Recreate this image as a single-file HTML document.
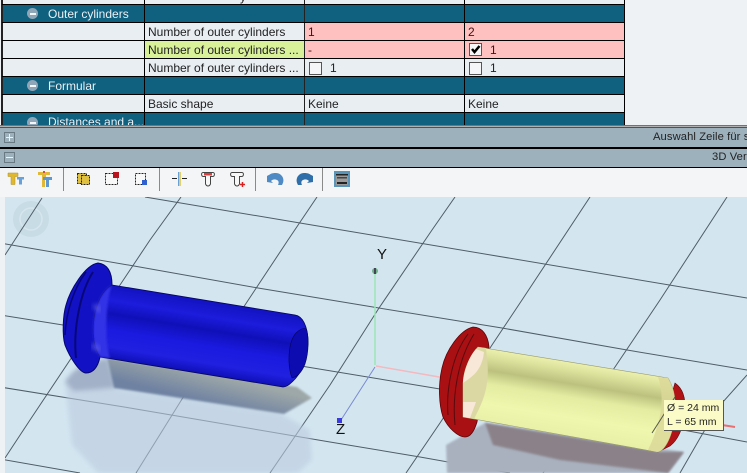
<!DOCTYPE html>
<html><head><meta charset="utf-8"><style>
html,body{margin:0;padding:0;background:#eef2f5}
#p{position:relative;width:747px;height:473px;overflow:hidden;background:#eef2f5;font-family:"Liberation Sans",sans-serif;font-size:12px;color:#222}
.a{position:absolute}
.t{position:absolute;white-space:nowrap;line-height:14px}
.w{color:#eaf0f4}
.cb{position:absolute;width:11px;height:11px;border:1px solid #555;background:#f4f6f7}
.min{position:absolute;width:11px;height:11px;border-radius:50%;background:#8fa6b8}
.min:after{content:"";position:absolute;left:3px;top:5px;width:6px;height:2px;background:#f4f6f8}
svg{position:absolute;left:0;top:0}
</style></head><body><div id="p">
<!-- table backgrounds -->
<div class="a" style="left:2px;top:0;width:622px;height:125px;background:#e8eef2"></div>
<div class="a" style="left:2px;top:4px;width:622px;height:18px;background:#10607f"></div>
<div class="a" style="left:2px;top:76px;width:622px;height:18px;background:#10607f"></div>
<div class="a" style="left:2px;top:112px;width:622px;height:13px;background:#10607f"></div>
<div class="a" style="left:304px;top:22px;width:320px;height:18px;background:#ffc0c0"></div>
<div class="a" style="left:304px;top:40px;width:320px;height:18px;background:#ffc0c0"></div>
<div class="a" style="left:145px;top:40px;width:159px;height:18px;background:#d9f29a"></div>
<!-- grid lines -->
<div class="a" style="left:1px;top:0;width:2px;height:127px;background:#222"></div>
<div class="a" style="left:144px;top:0;width:1px;height:126px;background:#000"></div>
<div class="a" style="left:304px;top:0;width:1px;height:126px;background:#222"></div>
<div class="a" style="left:464px;top:0;width:1px;height:125px;background:#000"></div>
<div class="a" style="left:624px;top:0;width:1px;height:125px;background:#000"></div>
<div class="a" style="left:2px;top:4px;width:623px;height:1px;background:#000"></div>
<div class="a" style="left:2px;top:22px;width:623px;height:1px;background:#000"></div>
<div class="a" style="left:2px;top:40px;width:623px;height:1px;background:#000"></div>
<div class="a" style="left:2px;top:58px;width:623px;height:1px;background:#000"></div>
<div class="a" style="left:2px;top:76px;width:623px;height:1px;background:#000"></div>
<div class="a" style="left:2px;top:94px;width:623px;height:1px;background:#000"></div>
<div class="a" style="left:2px;top:112px;width:623px;height:1px;background:#000"></div>
<!-- text -->
<div class="t" style="left:240px;top:-10px">y</div>
<div class="min" style="left:27px;top:8px"></div>
<div class="t w" style="left:48px;top:7px">Outer cylinders</div>
<div class="t" style="left:148px;top:25px">Number of outer cylinders</div>
<div class="t" style="left:148px;top:43px">Number of outer cylinders ...</div>
<div class="t" style="left:148px;top:61px">Number of outer cylinders ...</div>
<div class="t" style="left:308px;top:25px;color:#411">1</div>
<div class="t" style="left:468px;top:25px;color:#411">2</div>
<div class="t" style="left:308px;top:43px;color:#411">-</div>
<div class="cb" style="left:469px;top:43px"></div>
<svg width="747" height="473" style="z-index:2"><path d="M472 49l2.500 3 5-6" fill="none" stroke="#000" stroke-width="2.500"/></svg>
<div class="t" style="left:490px;top:43px;color:#411">1</div>
<div class="cb" style="left:309px;top:62px"></div>
<div class="t" style="left:330px;top:61px">1</div>
<div class="cb" style="left:469px;top:62px"></div>
<div class="t" style="left:490px;top:61px">1</div>
<div class="min" style="left:27px;top:80px"></div>
<div class="t w" style="left:48px;top:79px">Formular</div>
<div class="t" style="left:148px;top:97px">Basic shape</div>
<div class="t" style="left:308px;top:97px">Keine</div>
<div class="t" style="left:468px;top:97px">Keine</div>
<div class="a" style="left:2px;top:112px;width:622px;height:13px;overflow:hidden"><div class="min" style="left:25px;top:5px"></div><div class="t w" style="left:46px;top:3px">Distances and a...</div></div>
<!-- panel bars -->
<div class="a" style="left:0;top:125px;width:747px;height:3px;background:linear-gradient(#333,#ccc 40%,#222)"></div>
<div class="a" style="left:0;top:128px;width:747px;height:19px;background:#9db1bd"></div>
<div class="a" style="left:0;top:147px;width:747px;height:2px;background:#000"></div>
<div class="a" style="left:0;top:149px;width:747px;height:18px;background:#9db1bd"></div>
<div class="a" style="left:0;top:167px;width:747px;height:1px;background:#000"></div>
<div class="a" style="left:4px;top:132px;width:9px;height:9px;border:1px solid #6a7a84;background:linear-gradient(#eef2f4,#eef2f4) center/7px 1px no-repeat,linear-gradient(#eef2f4,#eef2f4) center/1px 7px no-repeat"></div>
<div class="a" style="left:4px;top:152px;width:9px;height:9px;border:1px solid #6a7a84;background:linear-gradient(#eef2f4,#eef2f4) center/7px 1px no-repeat"></div>
<div class="t" style="left:653px;top:130px;font-size:11.200px;letter-spacing:.1px;color:#222">Auswahl Zeile für s</div>
<div class="t" style="left:712px;top:150px;font-size:11.200px;letter-spacing:.1px;color:#222">3D Ver</div>
<!-- toolbar -->
<div class="a" style="left:0;top:168px;width:747px;height:29px;background:#f3f5f7"></div>
<div class="a" style="left:63px;top:168px;width:1px;height:23px;background:#8a8a8a"></div>
<div class="a" style="left:159px;top:168px;width:1px;height:23px;background:#8a8a8a"></div>
<div class="a" style="left:255px;top:168px;width:1px;height:23px;background:#8a8a8a"></div>
<div class="a" style="left:322px;top:168px;width:1px;height:23px;background:#8a8a8a"></div>
<!-- viewport -->
<div class="a" style="left:5px;top:197px;width:742px;height:276px;background:#d3e6f0;overflow:hidden"></div>
<svg width="747" height="473">
<defs>
<clipPath id="vp"><rect x="5" y="197" width="742" height="276"/></clipPath>
<linearGradient id="bl" gradientUnits="userSpaceOnUse" x1="206" y1="300" x2="194" y2="372">
<stop offset="0" stop-color="#1212c0"/><stop offset=".22" stop-color="#1c1cdc"/><stop offset=".4" stop-color="#1010b8"/><stop offset=".62" stop-color="#1a1ae0"/><stop offset=".85" stop-color="#2020e0"/><stop offset="1" stop-color="#1010b8"/></linearGradient>
<linearGradient id="yl" gradientUnits="userSpaceOnUse" x1="577" y1="362" x2="565" y2="436">
<stop offset="0" stop-color="#eef2b0"/><stop offset=".12" stop-color="#dce29c"/><stop offset=".3" stop-color="#bcc27e"/><stop offset=".48" stop-color="#e4eca2"/><stop offset=".75" stop-color="#eff7ae"/><stop offset="1" stop-color="#e8f0a8"/></linearGradient>
<linearGradient id="sh" gradientUnits="userSpaceOnUse" x1="205" y1="372" x2="198" y2="400"><stop offset="0" stop-color="#9ea8a8"/><stop offset="1" stop-color="#6f82a2"/></linearGradient>
<filter id="b2"><feGaussianBlur stdDeviation="1"/></filter>
<filter id="b4"><feGaussianBlur stdDeviation="2.500"/></filter>
</defs>
<g clip-path="url(#vp)">
<circle cx="31" cy="219" r="18" fill="#c8dce6"/><circle cx="31" cy="219" r="11" fill="none" stroke="#d6e6ee" stroke-width="1.500"/>
<g fill="none" stroke="#4f5d68" stroke-width="1">
<path d="M145 197L300 223 747 298"/>
<path d="M0 243L134 266 258 288 379 308 502 328 627 350 747 370"/>
<path d="M0 315L63 325 307 367 440 389 683 430 747 442"/>
<path d="M0 387L130 408 230 425 330 442 420 457 510 473"/>
<path d="M0 459L80 473"/>
<path d="M42 198L18 235 5 255"/>
<path d="M181 197L150 240 68 363 30 420 5 458"/>
<path d="M317 197L288 240 245 305 197 375 136 473"/>
<path d="M455 197L432 230 379 308 330 385 270 473"/>
<path d="M590 197L522 300 492 345 440 423 406 473"/>
<path d="M727 197L660 300 615 367 567 438 543 473"/>
<path d="M747 375L722 403 703 433 680 473"/>
</g>
<!-- blue shadow/reflection -->
<path d="M65 382L115 388 280 413 310 430 312 460 298 473 98 473 72 445Z" fill="#bccbdf" opacity=".6" filter="url(#b4)"/>
<path d="M65 382C75 365 90 362 108 358L116 388 74 391Z" fill="#a3b1c8" filter="url(#b4)"/>
<path d="M107 358L297 387 312 398 284 414 114 388Z" fill="url(#sh)" filter="url(#b2)"/>
<!-- red shadow/reflection -->
<path d="M446 445L485 423 684 452 668 473 447 473Z" fill="#a9b1bf" filter="url(#b2)"/>
<path d="M485 423L660 452 684 452 668 473 560 460 493 445Z" fill="#8b8289" filter="url(#b2)"/>
<!-- axes -->
<path d="M375 268V365" stroke="#9be6b4" stroke-width="1.500"/>
<circle cx="375" cy="271" r="3" fill="#6fb08a"/><rect x="374" y="268" width="2" height="6" fill="#445"/>
<path d="M376 366L445 378" stroke="#f4b8bf" stroke-width="1.500"/>
<path d="M375 367L341 420" stroke="#7a8ad0" stroke-width="1"/>
<rect x="337" y="418" width="5" height="5" fill="#3a3ae0"/>
<path d="M722 425L735 427" stroke="#e87070" stroke-width="2"/>
<!-- blue part -->
<path d="M98 263C106 264 112 270 112 285L100 357C98 366 94 373 86 373 80 373 70 358 65 345 62 335 63 315 66 305 70 290 85 265 98 263Z" fill="#1212c4" stroke="#05056a" stroke-width="1"/>
<path d="M65 335C66 312 74 288 86 272" fill="none" stroke="#06067a" stroke-width="1.500"/>
<path d="M76 358C73 330 80 292 93 272" fill="none" stroke="#07077a" stroke-width="2"/>
<path d="M112 285L295 315C302 316 308 325 308 343 307 360 302 373 292 382 289 385 286 387 283 387L100 357C88 340 92 296 112 285Z" fill="url(#bl)" stroke="#05055a" stroke-width=".8"/>
<path d="M100 357C88 340 92 296 112 285 106 300 104 340 110 358Z" fill="#3232e6" filter="url(#b2)"/>
<path d="M92 345l8 5M94 305l6 6" stroke="#6a6ae8" stroke-width="5" opacity=".6" filter="url(#b4)"/>
<path d="M306 328C309 335 309 352 305 364 302 372 297 377 292 378 287 365 288 342 296 333 299 330 303 328 306 328Z" fill="#0c0cb0" stroke="#05055a" stroke-width=".6"/>
<!-- red part -->
<path d="M473 327C482 327 488 335 489 347L477 422C474 432 470 437 465 437 458 437 448 428 443 417 439 405 438 385 442 368 446 350 460 330 473 327Z" fill="#a81014" stroke="#5a0508" stroke-width=".8"/>
<path d="M448 415C446 390 452 355 468 334M455 425C452 395 458 360 474 334" fill="none" stroke="#5a0a0c" stroke-width="1"/>
<path d="M675 383C682 388 686 396 685 413 683 428 678 440 670 446L658 452 670 400Z" fill="#b01216" stroke="#600608" stroke-width=".6"/>
<path d="M478 347L668 378C674 388 677 400 674 420 672 438 664 452 657 452L463 417 463 383C465 368 470 355 478 347Z" fill="url(#yl)" stroke="#9a9a68" stroke-width=".6"/>
<path d="M478 347C470 355 463 370 463 383L463 417 474 419C484 400 490 385 487 358L486 348Z" fill="#dcd8a4"/>
<path d="M476 349C468 358 464 372 463 383C470 378 482 372 484 352ZM463 402L463 417 470 418 476 402Z" fill="#f8e8d8"/>
<path d="M658 377L668 378C674 388 677 400 674 420 672 438 664 452 657 452L648 450C660 425 666 400 658 377Z" fill="#dcd898" opacity=".85"/>
<path d="M675 397L652 433" stroke="#55584a" stroke-width="1"/>
</g>
<!-- toolbar icons -->
<g>
<path d="M8 173h10v3.500h-3v8h-4v-8h-3z" fill="#e0b830" stroke="#b09020" stroke-width=".5"/>
<path d="M17 177h7v2.500h-2v5h-3v-5h-2z" fill="#6aa0d8"/>
<path d="M38 172h12v3h-4v2h-1v10h-3v-12h-4z" fill="#e2b838"/>
<path d="M43 177h9v3h-3v7h-3v-7h-3z" fill="#5f97d0"/>
<rect x="43" y="171" width="2" height="2" fill="#d05050"/>
<rect x="77.500" y="173.500" width="9" height="10" fill="#e0c040" stroke="#222" stroke-dasharray="2 1"/>
<rect x="81.500" y="175.500" width="8" height="9" fill="#e0c040" stroke="#222" stroke-dasharray="2 1"/>
<rect x="105.500" y="173.500" width="12" height="11" fill="#f8f8f8" stroke="#222" stroke-dasharray="2 1"/>
<rect x="113" y="172" width="6" height="6" fill="#b81420"/>
<rect x="135.500" y="173.500" width="10" height="11" fill="#f8f8f8" stroke="#222" stroke-dasharray="2 1"/>
<rect x="142" y="180" width="5" height="5" fill="#3060d0"/>
<path d="M172 178.500h5M187 178.500h-5" stroke="#222" stroke-width="1"/>
<path d="M178.500 172v14" stroke="#6aa0d8" stroke-width="1"/><path d="M180 172v14" stroke="#e0c040" stroke-width="1.500"/>
<path d="M203 172.500h10c2 0 2 4-.5 4h-2v7.500q-1 2-2.500 2t-2.500-2v-7.500h-2c-2.500 0-2.500-4-.500-4z" fill="#f8f8f8" stroke="#444"/>
<rect x="204" y="173" width="8" height="2.500" fill="#d84040"/>
<path d="M232 172.500h10c2 0 2 4-.5 4h-2v7.500q-1 2-2.500 2t-2.500-2v-7.500h-2c-2.500 0-2.500-4-.500-4z" fill="#f8f8f8" stroke="#444"/>
<path d="M240 184.500h5M242.500 182v5" stroke="#d82020" stroke-width="1.500"/>
<path d="M267 176c4-2 4-3 9-3 3 0 6 2 7 5 1 3 0 5-1 7h-4c1-2 1-4-1-5-2-1-4-1-6 1l2 2-6-1z" fill="#4f8ac4"/>
<path d="M313 176c-4-2-4-3-9-3-3 0-6 2-7 5-1 3 0 5 1 7h4c-1-2-1-4 1-5 2-1 4-1 6 1l-2 2 6-1z" fill="#2f6ea8"/>
<rect x="334" y="171" width="16" height="16" fill="#5a94b8"/>
<rect x="336" y="174" width="12" height="11" fill="#9a9a9a"/>
<rect x="336" y="174" width="12" height="1.500" fill="#222"/><rect x="337" y="177" width="10" height="1.500" fill="#444"/><rect x="337" y="182" width="10" height="2" fill="#222"/>
</g>
</svg>
<div class="t" style="left:377px;top:246px;font-size:15px;color:#111;line-height:17px">Y</div>
<div class="t" style="left:336px;top:421px;font-size:15px;color:#111;line-height:17px">Z</div>
<!-- tooltip -->
<div class="a" style="left:664px;top:400px;width:59px;height:30px;background:#fbfbc8;border-right:1px solid #555;border-bottom:1px solid #555"></div>
<div class="t" style="left:667px;top:401px;font-size:10.500px">Ø = 24 mm</div>
<div class="t" style="left:667px;top:415px;font-size:10.500px">L = 65 mm</div>
</div></body></html>
